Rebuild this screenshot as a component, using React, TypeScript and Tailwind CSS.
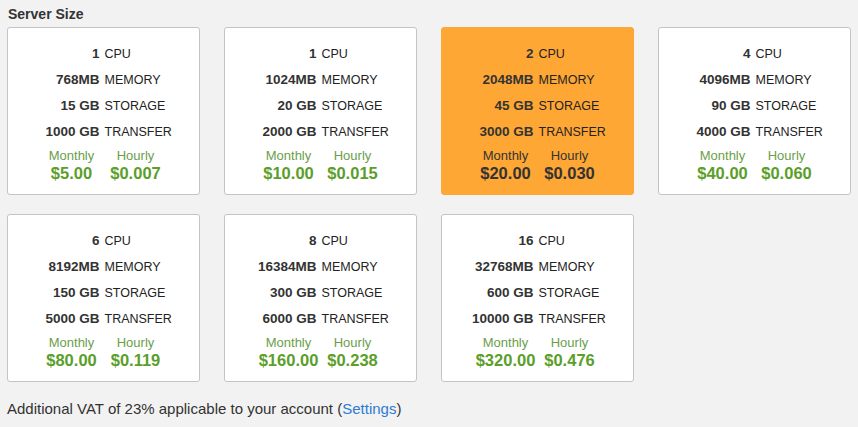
const plans = [
  { cpu: '1', memory: '768MB', storage: '15 GB', transfer: '1000 GB', monthly: '$5.00', hourly: '$0.007' },
  { cpu: '1', memory: '1024MB', storage: '20 GB', transfer: '2000 GB', monthly: '$10.00', hourly: '$0.015' },
  { cpu: '2', memory: '2048MB', storage: '45 GB', transfer: '3000 GB', monthly: '$20.00', hourly: '$0.030', selected: true },
  { cpu: '4', memory: '4096MB', storage: '90 GB', transfer: '4000 GB', monthly: '$40.00', hourly: '$0.060' },
  { cpu: '6', memory: '8192MB', storage: '150 GB', transfer: '5000 GB', monthly: '$80.00', hourly: '$0.119' },
  { cpu: '8', memory: '16384MB', storage: '300 GB', transfer: '6000 GB', monthly: '$160.00', hourly: '$0.238' },
  { cpu: '16', memory: '32768MB', storage: '600 GB', transfer: '10000 GB', monthly: '$320.00', hourly: '$0.476' },
];

type Plan = (typeof plans)[number];

function PlanCard({ plan }: { plan: Plan }) {
  const specs = [
    [plan.cpu, 'CPU'],
    [plan.memory, 'MEMORY'],
    [plan.storage, 'STORAGE'],
    [plan.transfer, 'TRANSFER'],
  ];
  const sel = !!plan.selected;

  return (
    <div
      className={`h-[168px] rounded-[3px] border pt-[13px] ${
        sel ? 'border-[#ffa734] bg-[#ffa734]' : 'border-[#c4c4c4] bg-white'
      }`}
    >
      {/* Specs */}
      {specs.map(([value, unit]) => (
        <div key={unit} className="grid h-[26px] grid-cols-2 items-center leading-[26px]">
          <span className="pr-[4px] text-right text-[13.5px] font-bold text-[#333]">{value}</span>
          <span className="pl-[1px] text-[12.5px] text-[#222]">{unit}</span>
        </div>
      ))}

      {/* Prices */}
      <div className="mt-[3px] flex justify-center">
        {[
          ['Monthly', plan.monthly],
          ['Hourly', plan.hourly],
        ].map(([label, price]) => (
          <div key={label} className="flex w-[64px] flex-col items-center whitespace-nowrap">
            <span className={`text-[13px] leading-[16px] ${sel ? 'text-[#333]' : 'text-[#6a9e4a]'}`}>{label}</span>
            <span className={`text-[16.5px] font-bold leading-[18px] ${sel ? 'text-[#333]' : 'text-[#5b9e2a]'}`}>
              {price}
            </span>
          </div>
        ))}
      </div>
    </div>
  );
}

export default function App() {
  return (
    <div className="h-[427px] w-[858px] bg-[#f2f2f2] pl-[7px] pt-[4px] font-['Liberation_Sans',Arial,sans-serif] text-[#333]">
      <h2 className="pl-[1px] text-[14px] font-bold leading-[20px]">Server Size</h2>

      <div className="mt-[3px] grid grid-cols-[repeat(4,193px)] gap-x-[24px] gap-y-[19px]">
        {plans.map((plan, i) => (
          <PlanCard key={i} plan={plan} />
        ))}
      </div>

      <p className="mt-[17px] text-[15px] leading-[20px] text-[#333]">
        Additional VAT of 23% applicable to your account (<a className="text-[#2d7bd3]">Settings</a>)
      </p>
    </div>
  );
}
